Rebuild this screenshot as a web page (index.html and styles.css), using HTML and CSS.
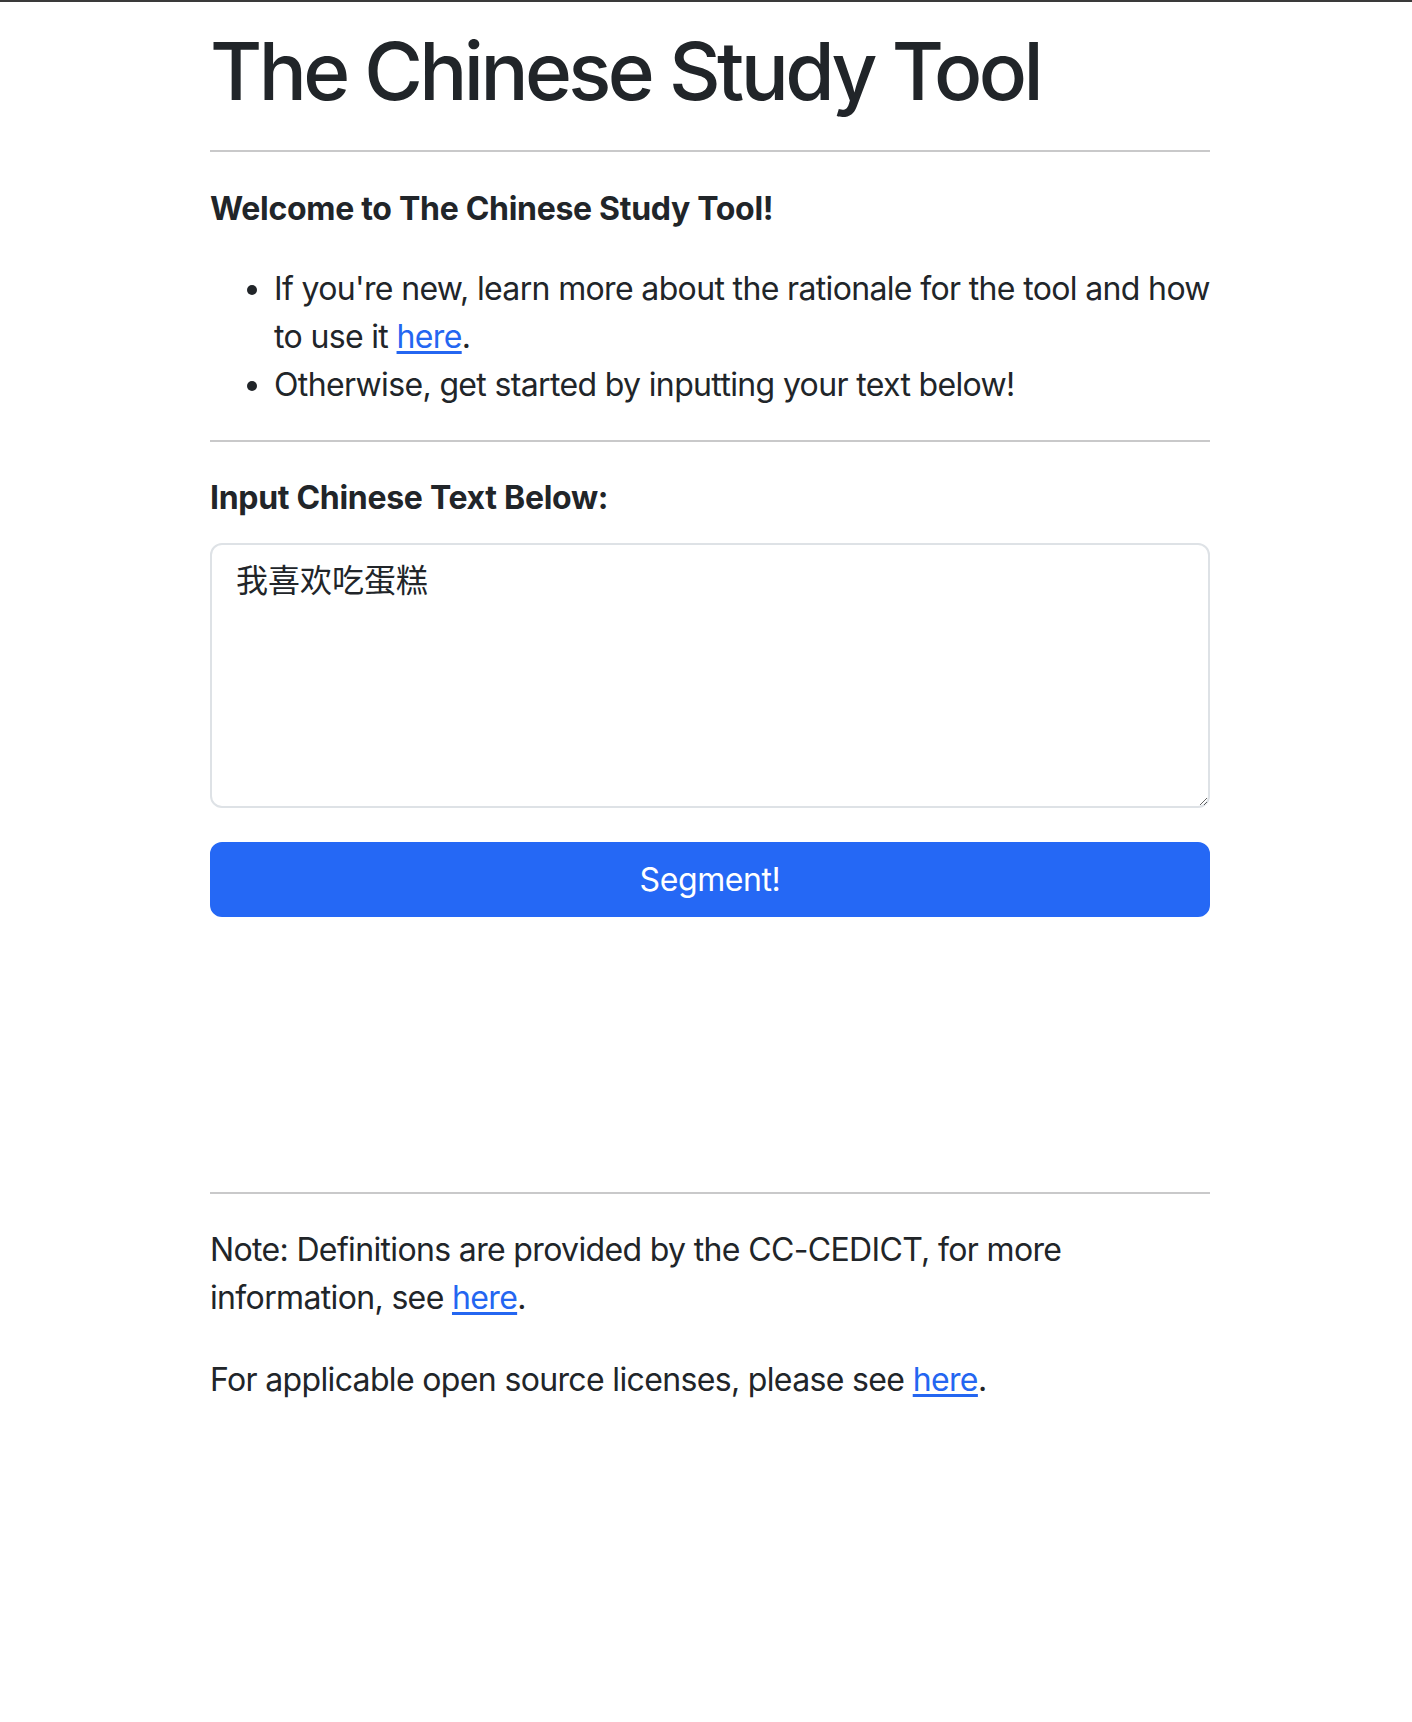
FILE: index.html
```html
<!DOCTYPE html>
<html lang="en">
<head>
<meta charset="utf-8">
<title>The Chinese Study Tool</title>
<link rel="stylesheet" href="styles.css">
</head>
<body>
<div class="topbar"></div>
<div class="page">
  <main class="container">
    <h1 class="title">The Chinese Study Tool</h1>
    <hr class="rule">
    <p class="heading heading-welcome">Welcome to The Chinese Study Tool!</p>
    <ul class="intro-list">
      <li>If you're new, learn more about the rationale for the tool and how to use it <a href="#">here</a>.</li>
      <li>Otherwise, get started by inputting your text below!</li>
    </ul>
    <hr class="rule">
    <label class="heading heading-input" for="text">Input Chinese Text Below:</label>
    <textarea id="text" class="text-input">我喜欢吃蛋糕</textarea>
    <button class="btn-primary" type="button">Segment!</button>
    <div class="results"></div>
    <hr class="rule">
    <p class="note">Note: Definitions are provided by the CC-CEDICT, for more information, see <a href="#">here</a>.</p>
    <p class="note">For applicable open source licenses, please see <a href="#">here</a>.</p>
  </main>
</div>
</body>
</html>
```
FILE: styles.css
```css
html, body {
  margin: 0;
  padding: 0;
  background: #ffffff;
}
body {
  font-family: Inter, "Noto Sans", "Noto Sans CJK SC", sans-serif;
  font-size: 32px;
  line-height: 48px;
  color: #212529;
  letter-spacing: -0.65px;
}
.topbar {
  height: 2px;
  background: #3a3a3a;
}
.page {
  padding-left: 8px;
}
.container {
  width: 1000px;
  margin: 0 auto;
  display: flex;
  flex-direction: column;
}
.title {
  margin: 21px 0 0 0;
  font-size: 80px;
  line-height: 96px;
  font-weight: 500;
  letter-spacing: -3.6px;
}
.rule {
  margin: 0;
  border: 0;
  height: 2px;
  background: #c9c9ca;
}
.title + .rule {
  margin-top: 31px;
}
.heading {
  display: block;
  font-weight: 700;
  font-size: 32px;
  line-height: 48px;
  letter-spacing: -0.3px;
}
.heading-welcome {
  margin: 33px 0 32px 0;
}
.intro-list {
  margin: 0 0 31px 0;
  padding-left: 64px;
}
.heading-input {
  margin: 32px 0 21px 0;
}
.text-input {
  display: block;
  box-sizing: border-box;
  width: 1000px;
  height: 265px;
  margin: 0;
  padding: 12px 24px;
  border: 2px solid #dee2e6;
  border-radius: 12px;
  font-family: Inter, "Noto Sans CJK SC", sans-serif;
  font-size: 32px;
  line-height: 48px;
  color: #212529;
  background: #fff;
  resize: vertical;
}
.btn-primary {
  display: block;
  box-sizing: border-box;
  width: 1000px;
  height: 75px;
  margin: 34px 0 0 0;
  padding: 12px 24px;
  border: 2px solid #2568f5;
  border-radius: 12px;
  background: #2568f5;
  color: #ffffff;
  font-family: Inter, "Noto Sans", sans-serif;
  font-size: 32px;
  line-height: 48px;
  font-weight: 400;
  letter-spacing: -0.4px;
  cursor: pointer;
}
.results {
  height: 275px;
}
.note {
  margin: 32px 0 0 0;
}
.note + .note {
  margin-top: 34px;
}
a {
  color: #2466f1;
  text-decoration: underline;
  text-underline-offset: 3px;
}
```
